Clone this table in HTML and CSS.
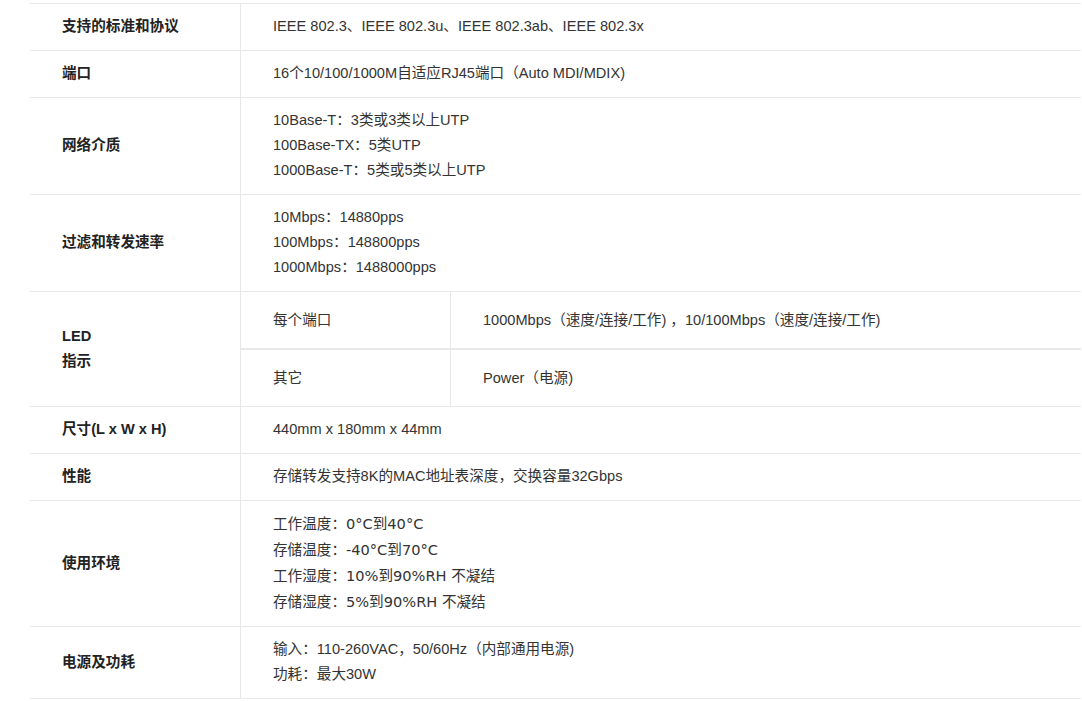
FILE: index.html
```html
<!DOCTYPE html>
<html lang="zh-CN">
<head>
    <meta charset="UTF-8">
    <title>产品规格</title>
    <link rel="stylesheet" href="styles.css">
</head>
<body>
    <table class="spec-table">
        <tr>
            <th>支持的标准和协议</th>
            <td>IEEE 802.3、IEEE 802.3u、IEEE 802.3ab、IEEE 802.3x</td>
        </tr>
        <tr>
            <th>端口</th>
            <td>16个10/100/1000M自适应RJ45端口（Auto MDI/MDIX)</td>
        </tr>
        <tr>
            <th>网络介质</th>
            <td>10Base-T：3类或3类以上UTP<br>100Base-TX：5类UTP<br>1000Base-T：5类或5类以上UTP</td>
        </tr>
        <tr>
            <th>过滤和转发速率</th>
            <td>10Mbps：14880pps<br>100Mbps：148800pps<br>1000Mbps：1488000pps</td>
        </tr>
        <tr>
            <th>LED<br>指示</th>
            <td class="nested-cell">
                <table class="sub-table">
                    <tr>
                        <td class="sub-key">每个端口</td>
                        <td>1000Mbps（速度/连接/工作) ，10/100Mbps（速度/连接/工作)</td>
                    </tr>
                    <tr>
                        <td class="sub-key">其它</td>
                        <td>Power（电源)</td>
                    </tr>
                </table>
            </td>
        </tr>
        <tr>
            <th>尺寸(L x W x H)</th>
            <td>440mm x 180mm x 44mm</td>
        </tr>
        <tr>
            <th>性能</th>
            <td>存储转发支持8K的MAC地址表深度，交换容量32Gbps</td>
        </tr>
        <tr>
            <th>使用环境</th>
            <td class="env">工作温度：0°C到40°C<br>存储温度：-40°C到70°C<br>工作湿度：10%到90%RH 不凝结<br>存储湿度：5%到90%RH 不凝结</td>
        </tr>
        <tr>
            <th>电源及功耗</th>
            <td>输入：110-260VAC，50/60Hz（内部通用电源)<br>功耗：最大30W</td>
        </tr>
    </table>
</body>
</html>
```

FILE: styles.css
```css
body {
    margin: 0;
    padding: 3px 0 0 30px;
    background: #ffffff;
    font-family: "Liberation Sans", Arial, "Noto Sans CJK SC", sans-serif;
    font-size: 14.6px;
    color: #333333;
}

.spec-table {
    width: 1051px;
    border-collapse: collapse;
}

.spec-table th,
.spec-table td {
    border-top: 1px solid #e8e8e8;
    border-bottom: 1px solid #e8e8e8;
    line-height: 25px;
    padding: 10px 32px 11px;
    text-align: left;
    vertical-align: middle;
}

.spec-table th {
    width: 146px;
    font-weight: bold;
    color: #222222;
    border-right: 1px solid #e8e8e8;
}

/* wider latin glyphs in this row, like the original */
.spec-table td.env {
    font-family: "DejaVu Sans", "Noto Sans CJK SC", sans-serif;
    line-height: 26px;
}

.spec-table td.nested-cell {
    padding: 0;
}

.sub-table {
    width: 100%;
    border-collapse: collapse;
}

.sub-table td {
    border: none;
    height: 56px;
    padding: 0 32px;
    line-height: 25px;
    vertical-align: middle;
}

.sub-table tr + tr td {
    border-top: 2px solid #e8e8e8;
}

.sub-table td.sub-key {
    width: 145px;
    border-right: 1px solid #e8e8e8;
}
```
